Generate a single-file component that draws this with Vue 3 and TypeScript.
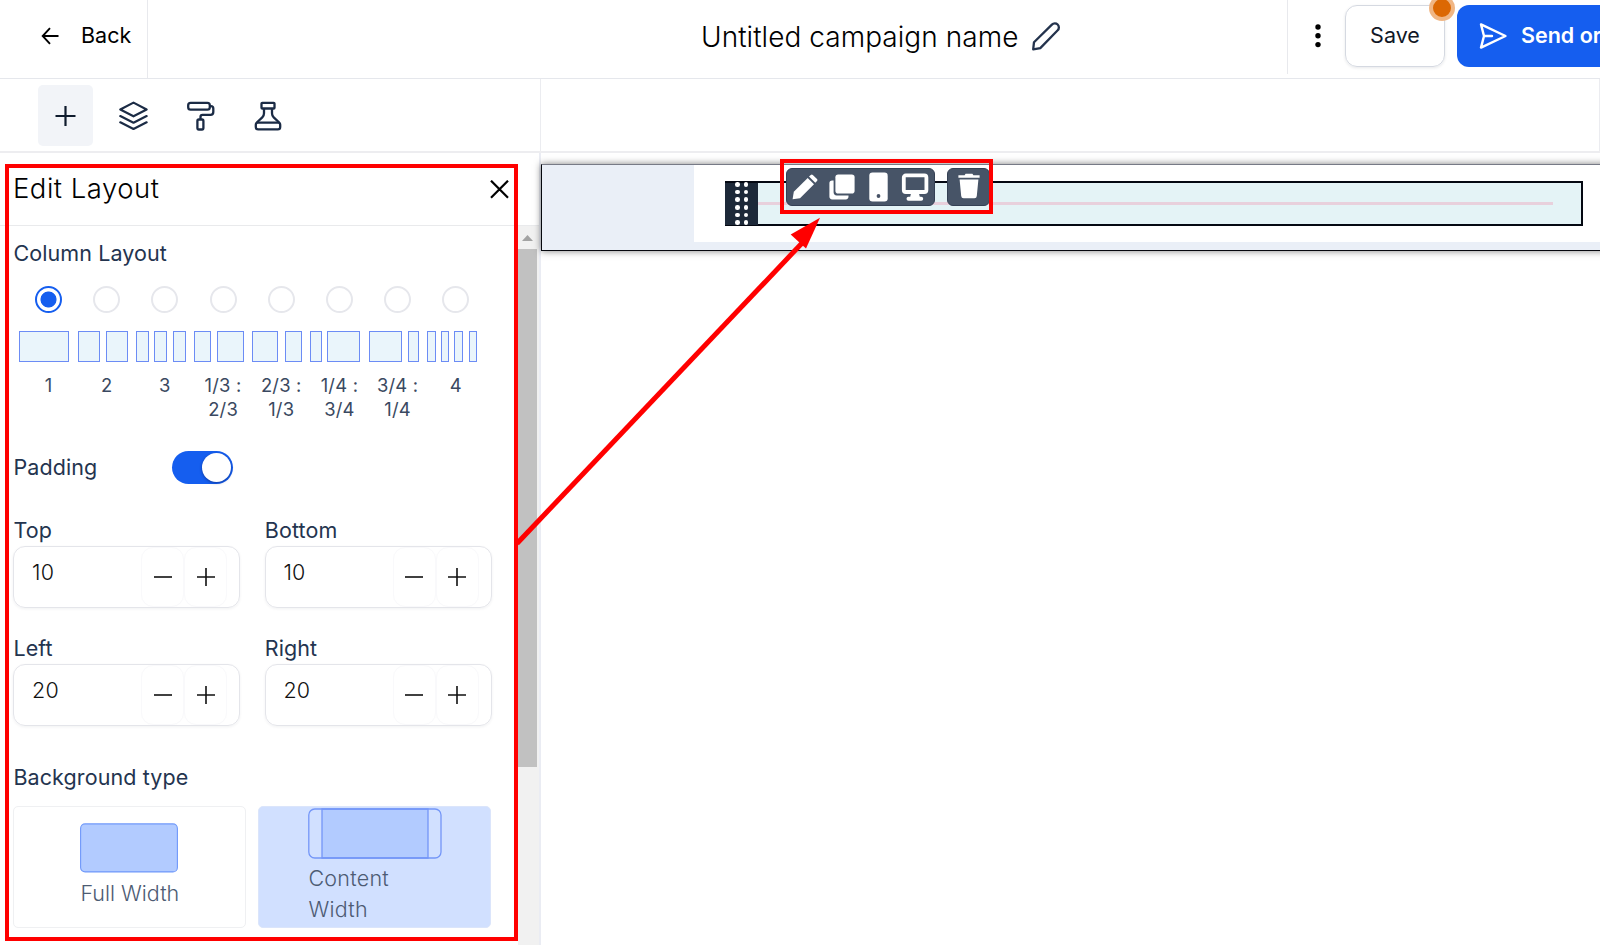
<script setup lang="ts">
import { type Ref, ref } from 'vue';

interface ColumnLayout {
    label: string;
    bars: number[];
}

interface Side {
    name: string;
    value: number;
}

const layouts: ColumnLayout[] = [
    { label: '1', bars: [50] },
    { label: '2', bars: [22, 22] },
    { label: '3', bars: [13, 13, 13] },
    { label: '1/3 : 2/3', bars: [17, 27] },
    { label: '2/3 : 1/3', bars: [26, 17] },
    { label: '1/4 : 3/4', bars: [12, 33] },
    { label: '3/4 : 1/4', bars: [33, 11] },
    { label: '4', bars: [9, 8, 9, 8] },
];

const selected: Ref<number> = ref(0);
const padding: Ref<boolean> = ref(true);
const background: Ref<string> = ref('content');

const sides: Ref<Side[]> = ref([
    { name: 'Top', value: 10 },
    { name: 'Bottom', value: 10 },
    { name: 'Left', value: 20 },
    { name: 'Right', value: 20 },
]);
</script>

<template>
    <div class="page">
        <header class="header">
            <button class="back">
                <svg width="18" height="18" viewBox="0 0 18 18" fill="none" stroke="#000" stroke-width="1.9">
                    <path d="M17.5 9H2M9 1.2 1.7 9 9 16.8" />
                </svg>
                <span>Back</span>
            </button>

            <div class="title">
                <span>Untitled campaign name</span>
                <svg width="30" height="30" viewBox="0 0 30 30" fill="none" stroke="#24334d" stroke-width="2.3" stroke-linejoin="round">
                    <path d="M2.2 27.4 3 20.2 20.9 2.6a4 4 0 0 1 5.8 5.7L9.3 26.1z" />
                </svg>
            </div>

            <div class="actions">
                <svg class="more" width="8" height="26" viewBox="0 0 8 26">
                    <circle cx="4" cy="4" r="2.7" />
                    <circle cx="4" cy="12.8" r="2.7" />
                    <circle cx="4" cy="21.6" r="2.7" />
                </svg>
                <button class="save">
                    Save
                    <i class="badge"></i>
                </button>
                <button class="send">
                    <svg width="29" height="28" viewBox="0 0 29 28" fill="none" stroke="#fff" stroke-width="2.4" stroke-linejoin="round" stroke-linecap="round">
                        <path d="M2 2.4 26.5 14 2 25.6 5 14zM5 14h8" />
                    </svg>
                    <span>Send or</span>
                </button>
            </div>
        </header>

        <nav class="tabs">
            <div class="tab-list">
                <button class="tab active">
                    <svg width="22" height="22" viewBox="0 0 22 22" stroke="#0f1b2d" stroke-width="2.2">
                        <path d="M10.5 1v20M.5 11h20" />
                    </svg>
                </button>
                <button class="tab">
                    <svg width="30" height="30" viewBox="0 0 30 30" fill="none" stroke="#1b2b45" stroke-width="2.2" stroke-linejoin="round" stroke-linecap="round">
                        <path d="M15.5 1.6 28.6 8.5 15.5 15.3 2.3 8.5zM2.3 15.1 15.5 21.7l13.1-6.6M2.3 21.3 15.5 28l13.1-6.7" />
                    </svg>
                </button>
                <button class="tab">
                    <svg width="30" height="30" viewBox="0 0 30 30" fill="none" stroke="#1b2b45" stroke-width="2.3">
                        <rect x="2.2" y="1.8" width="21.6" height="6.8" rx="2.4" />
                        <path d="M23.8 5.1h1.1q2.4 0 2.4 2.4v3.6q0 2.8-2.8 2.8h-8q-2 0-2 2v2.6" />
                        <rect x="11.4" y="18.5" width="6" height="10" rx="1.4" />
                    </svg>
                </button>
                <button class="tab">
                    <svg width="30" height="30" viewBox="0 0 30 30" fill="none" stroke="#1b2b45" stroke-width="2.3" stroke-linejoin="round">
                        <rect x="8.5" y="1.8" width="13" height="5.7" rx="0.8" />
                        <path d="M11 7.5v4.8q0 2.4-1.7 4l-5.5 5.2M19 7.5v4.8q0 2.4 1.7 4l5.5 5.2" />
                        <path d="M5 21.6h20q2.2 0 2.2 2.2v2.2q0 2.4-2.4 2.4H5.2q-2.4 0-2.4-2.4v-2.2q0-2.2 2.2-2.2z" />
                    </svg>
                </button>
            </div>
            <div class="tab-rest"></div>
        </nav>

        <main class="body">
            <aside class="panel">
                <div class="panel-head">
                    <h2>Edit Layout</h2>
                    <svg width="19" height="19" viewBox="0 0 19 19" stroke="#000" stroke-width="2.2">
                        <path d="M1 .7 18 17.7M18 .7 1 17.7" />
                    </svg>
                </div>

                <div class="panel-scroll">
                    <div class="panel-content">
                        <h3 class="label">Column Layout</h3>
                        <div class="layouts">
                            <div
                                v-for="(layout, i) in layouts"
                                :key="layout.label"
                                class="layout"
                                @click="selected = i"
                            >
                                <i class="radio" :class="{ checked: selected == i }"></i>
                                <div class="bars">
                                    <i
                                        v-for="(bar, j) in layout.bars"
                                        :key="j"
                                        class="bar"
                                        :style="{ width: bar + 'px' }"
                                    ></i>
                                </div>
                                <span class="layout-label">{{ layout.label }}</span>
                            </div>
                        </div>

                        <div class="padding-row">
                            <span class="label">Padding</span>
                            <button class="switch" :class="{ on: padding }" @click="padding = !padding">
                                <i></i>
                            </button>
                        </div>

                        <div class="sides">
                            <div v-for="side in sides" :key="side.name" class="side">
                                <span class="label">{{ side.name }}</span>
                                <div class="stepper">
                                    <span class="value">{{ side.value }}</span>
                                    <button class="step" @click="side.value--">
                                        <svg width="18" height="18" viewBox="0 0 18 18" stroke="#111" stroke-width="1.6">
                                            <path d="M0 9h18" />
                                        </svg>
                                    </button>
                                    <button class="step" @click="side.value++">
                                        <svg width="18" height="18" viewBox="0 0 18 18" stroke="#111" stroke-width="1.6">
                                            <path d="M0 9h18M9 0v18" />
                                        </svg>
                                    </button>
                                </div>
                            </div>
                        </div>

                        <h3 class="label bg-label">Background type</h3>
                        <div class="bg-types">
                            <div class="bg-type full" :class="{ selected: background == 'full' }" @click="background = 'full'">
                                <svg width="98" height="50" viewBox="0 0 98 50" fill="#b2cbff" stroke="#6f98fa" stroke-width="1.1">
                                    <rect x="0.6" y="0.9" width="96.8" height="48" rx="4.5" />
                                </svg>
                                <span>Full Width</span>
                            </div>
                            <div class="bg-type content" :class="{ selected: background == 'content' }" @click="background = 'content'">
                                <svg width="134" height="51" viewBox="0 0 134 51" fill="none" stroke="#7496f8" stroke-width="1.3">
                                    <path d="M14 1h106v49H14z" fill="#b2cbff" />
                                    <rect x="0.8" y="1" width="132.2" height="49" rx="6" />
                                </svg>
                                <span>Content Width</span>
                            </div>
                        </div>
                    </div>

                    <div class="scrollbar">
                        <svg width="11" height="6" viewBox="0 0 11 6" fill="#a3a3a3">
                            <path d="M5.5 0 11 6H0z" />
                        </svg>
                        <div class="thumb"></div>
                    </div>
                </div>
            </aside>

            <section class="canvas">
                <div class="row-block">
                    <div class="row-inner">
                        <div class="divider-block">
                            <div class="handle">
                                <i v-for="n in 12" :key="n"></i>
                            </div>
                            <div class="divider-line"></div>
                        </div>
                    </div>
                </div>
            </section>
        </main>

        <div class="block-tools">
            <div class="tool-group">
                <svg width="26" height="26" viewBox="0 0 26 26" fill="#fff">
                    <path d="M.6 25.2 1.8 17.8 15.7 3.9l6.3 6.3L8 24.2z" />
                    <path d="m17 2.6 1.8-1.7q1-.9 2 0L25 5q1 1 0 2l-1.7 1.8z" />
                </svg>
                <svg class="copy" width="26" height="26" viewBox="0 0 26 26" fill="#fff">
                    <rect x="6.4" y="0.4" width="19.2" height="19.2" rx="2.8" />
                    <path d="M4.6 6.5v11.8q0 3.1 3.1 3.1h11.8v1.2q0 2.8-2.8 2.8H3.2Q.4 25.4.4 22.6V9.3Q.4 6.5 3.2 6.5z" />
                </svg>
                <svg width="19" height="30" viewBox="0 0 19 30" fill="#fff">
                    <rect x="0.3" y="0.5" width="18.4" height="29" rx="3.2" />
                    <circle cx="9.5" cy="24" r="1.9" fill="#475266" />
                </svg>
                <svg width="28" height="30" viewBox="0 0 28 30">
                    <rect x="2.8" y="3.4" width="22.6" height="16.6" rx="2" fill="none" stroke="#fff" stroke-width="3.8" />
                    <path d="M10 21.5h8l.8 3.3h1.4q2 0 2 2t-2 2H7.5q-2 0-2-2t2-2h1.7z" fill="#fff" />
                </svg>
            </div>
            <div class="tool-group trash">
                <svg width="22" height="26" viewBox="0 0 22 26" fill="#fff">
                    <path d="M.4 2.2h6.2L7.6.7h6.8l1 1.5h6.2v2.6H.4zM1.6 6.4h18.8L18.8 23q-.2 2.2-2.4 2.2H5.6Q3.4 25.2 3.2 23z" />
                </svg>
            </div>
        </div>

        <div class="mark mark-panel"></div>
        <div class="mark mark-tools"></div>
        <svg class="mark-arrow" width="320" height="340" viewBox="0 0 320 340">
            <path d="M7 333.5 294 31" stroke="#f00" stroke-width="5" />
            <path d="M310 7.7 280.7 24.4 296 38.4z" fill="#f00" />
        </svg>
    </div>
</template>

<style>
body {
    margin: 0;
    background: #fff;
}
</style>

<style scoped>
.page {
    position: relative;
    display: flex;
    flex-direction: column;
    width: 1600px;
    height: 945px;
    overflow: hidden;
    font-family: Inter, "Liberation Sans", sans-serif;
    color: #000;
}

.page * {
    box-sizing: border-box;
}

button {
    display: flex;
    align-items: center;
    margin: 0;
    padding: 0;
    border: 0;
    background: none;
    font: inherit;
    color: inherit;
}

h2,
h3 {
    margin: 0;
    font-weight: 400;
}

svg {
    flex: none;
    display: block;
}

.header {
    display: flex;
    flex: none;
    height: 79px;
    border-bottom: 1px solid #e5e7ec;
}

.back {
    width: 148px;
    padding: 0 0 6px 41px;
    gap: 22px;
    border-right: 1px solid #e8e9ed;
    font-size: 21.5px;
}

.back span {
    padding-bottom: 2px;
}

.title {
    display: flex;
    flex: 1;
    align-items: center;
    gap: 13px;
    padding: 0 0 5px 553px;
    font-size: 28px;
    font-weight: 300;
    letter-spacing: 0.05px;
    white-space: nowrap;
}

.actions {
    display: flex;
    flex: none;
    align-items: flex-start;
    width: 313px;
    padding-top: 5px;
    background: linear-gradient(#e8e9ed, #e8e9ed) 0 0 / 1px 74px no-repeat;
}

.more {
    margin: 18px 23px 0 27px;
}

.save {
    position: relative;
    flex: none;
    justify-content: center;
    width: 100px;
    height: 62px;
    margin-right: 12px;
    padding-bottom: 2px;
    border: 1px solid #d5d9e1;
    border-radius: 12px;
    box-shadow: 0 1px 3px rgba(20, 30, 50, 0.1);
    font-size: 21.5px;
    color: #111827;
}

.badge {
    position: absolute;
    top: -11px;
    right: -11px;
    width: 26px;
    height: 26px;
    border: 4px solid #f0b684;
    border-radius: 50%;
    background: #dc6803;
}

.send {
    flex: none;
    gap: 13px;
    width: 260px;
    height: 62px;
    padding: 0 0 1px 22px;
    border-radius: 12px;
    background: #155eef;
    font-size: 21.5px;
    font-weight: 600;
    color: #fff;
}

.send span {
    padding-bottom: 1px;
}

.tabs {
    display: flex;
    flex: none;
    height: 74px;
    border-bottom: 2px solid #ededf0;
}

.tab-list {
    display: flex;
    width: 540px;
    padding: 6px 0 0 38px;
    gap: 12.5px;
}

.tab {
    justify-content: center;
    width: 55px;
    height: 61px;
    border-radius: 5px;
}

.tab.active {
    background: #f2f4f8;
}

.tab-rest {
    flex: 1;
    border: solid #ebecf0;
    border-width: 0 1px;
}

.body {
    display: flex;
    flex: 1;
    min-height: 0;
}

.panel {
    display: flex;
    flex-direction: column;
    width: 541px;
    border-right: 2px solid #eaecf3;
}

.panel-head {
    display: flex;
    flex: none;
    justify-content: space-between;
    height: 73px;
    padding: 27px 30px 0 13px;
    border-bottom: 1px solid #e9eaec;
}

.panel-head h2 {
    margin-top: -9px;
    font-size: 27.5px;
    font-weight: 300;
    letter-spacing: 0.5px;
    line-height: 34px;
}

.panel-scroll {
    display: flex;
    flex: 1;
    min-height: 0;
}

.panel-content {
    width: 518px;
    padding: 12px 0 0 13.4px;
}

.label {
    display: block;
    font-size: 21.5px;
    letter-spacing: 0.1px;
    line-height: 30px;
    color: #24344f;
}

.layouts {
    display: flex;
    margin-top: 18px;
    padding-left: 6px;
}

.layout {
    display: flex;
    flex-direction: column;
    align-items: center;
    width: 58.2px;
}

.radio {
    width: 27px;
    height: 27px;
    border: 2px solid #e6e7ec;
    border-radius: 50%;
}

.radio.checked {
    border-color: #155eef;
    background: radial-gradient(#155eef 7.6px, #fff 8.4px);
}

.bars {
    display: flex;
    align-self: flex-start;
    justify-content: space-between;
    width: 50px;
    height: 31px;
    margin-top: 18px;
}

.bar {
    border: 1px solid #6c8cf5;
    background: #eaf5fb;
}

.layout-label {
    width: 50px;
    margin-top: 11px;
    font-size: 18.4px;
    letter-spacing: 0.2px;
    line-height: 24.4px;
    text-align: center;
    color: #3a4961;
}

.padding-row {
    display: flex;
    align-items: flex-end;
    height: 34px;
    margin-top: 28px;
}

.padding-row .label {
    width: 159px;
    line-height: 33px;
}

.switch {
    justify-content: flex-start;
    width: 61px;
    height: 33px;
    padding: 0 2px;
    border-radius: 17px;
    background: #c9ced8;
}

.switch.on {
    justify-content: flex-end;
    background: #155eef;
}

.switch i {
    width: 29px;
    height: 29px;
    border-radius: 50%;
    background: #fff;
    box-shadow: 0 1px 3px rgba(0, 0, 40, 0.4);
}

.sides {
    display: grid;
    grid-template-columns: 227px 227px;
    gap: 25px 24.4px;
    margin-top: 31px;
}

.side .label {
    height: 31px;
}

.stepper {
    display: flex;
    height: 62px;
    padding-right: 12px;
    border: 1px solid #e4e5ea;
    border-radius: 12px;
    box-shadow: 0 1px 3px rgba(20, 30, 50, 0.06);
}

.value {
    flex: 1;
    padding: 10px 0 0 17.6px;
    font-size: 21.5px;
    font-weight: 300;
    letter-spacing: 0.2px;
    line-height: 31px;
    color: #111;
}

.step {
    justify-content: center;
    width: 43px;
    height: 60px;
    border: 1px solid #f9f9fb;
    border-radius: 12px;
}

.bg-label {
    margin-top: 36px;
}

.bg-types {
    display: flex;
    gap: 12px;
    margin-top: 14px;
}

.bg-type {
    display: flex;
    flex-direction: column;
    width: 233px;
    height: 122px;
    border: 1px solid #eff0f2;
    border-radius: 5px;
    font-size: 21.5px;
    font-weight: 300;
    line-height: 30.5px;
    color: #4d5b73;
}

.bg-type.selected {
    border-color: #dbe5fb;
    background: #d1e0ff;
}

.full {
    padding: 16px 0 0 66px;
}

.full span {
    margin-top: 5px;
}

.content {
    padding: 1px 0 0 49px;
}

.content span {
    width: 110px;
    margin-top: 4.5px;
    letter-spacing: 0.25px;
}

.scrollbar {
    display: flex;
    flex-direction: column;
    align-items: center;
    width: 21px;
    padding: 9px 2px 0 0;
    background: #f1f1f1;
}

.thumb {
    width: 19px;
    height: 518px;
    margin-top: 8px;
    background: #c1c1c1;
}

.canvas {
    flex: 1;
    min-width: 0;
    padding-top: 11px;
}

.row-block {
    width: 1080px;
    height: 87px;
    padding-left: 152px;
    border: 1px solid #05070d;
    border-top-color: #777a86;
    background: #eaeff7;
    box-shadow: 0 0 7px rgba(0, 0, 0, 0.5);
}

.row-inner {
    height: 77px;
    padding: 16px 0 0 31px;
    background: #fff;
}

.divider-block {
    display: flex;
    align-items: center;
    width: 858px;
    height: 45px;
    border: 2.5px solid #040812;
    border-left: 0;
    background: #e4f3f6;
}

.handle {
    display: grid;
    grid-template-columns: 4.6px 4.6px;
    justify-content: center;
    align-content: center;
    gap: 3px 4px;
    width: 33px;
    height: 42px;
    background: #1d2939;
}

.handle i {
    height: 4.6px;
    border-radius: 50%;
    background: #fff;
}

.divider-line {
    width: 795px;
    height: 3px;
    margin-bottom: 1px;
    background: #e8d0dc;
}

/* floating toolbar over the selected block */
.block-tools {
    position: absolute;
    top: 168px;
    left: 786px;
    display: flex;
    gap: 12px;
}

.tool-group {
    display: flex;
    align-items: center;
    justify-content: space-between;
    width: 149px;
    height: 38px;
    padding: 0 5px;
    border: 1px solid #344054;
    border-radius: 6px;
    background: #475467;
}

.copy {
    margin: 0 2px 0 -2px;
}

.tool-group.trash {
    width: 43px;
    padding: 0 0 2px;
    justify-content: center;
}

.mark {
    position: absolute;
    border: 4px solid #f00;
}

.mark-panel {
    top: 164px;
    left: 5px;
    width: 513px;
    height: 777px;
}

.mark-tools {
    top: 159px;
    left: 780px;
    width: 213px;
    height: 55px;
}

.mark-arrow {
    position: absolute;
    top: 210px;
    left: 510px;
}
</style>
